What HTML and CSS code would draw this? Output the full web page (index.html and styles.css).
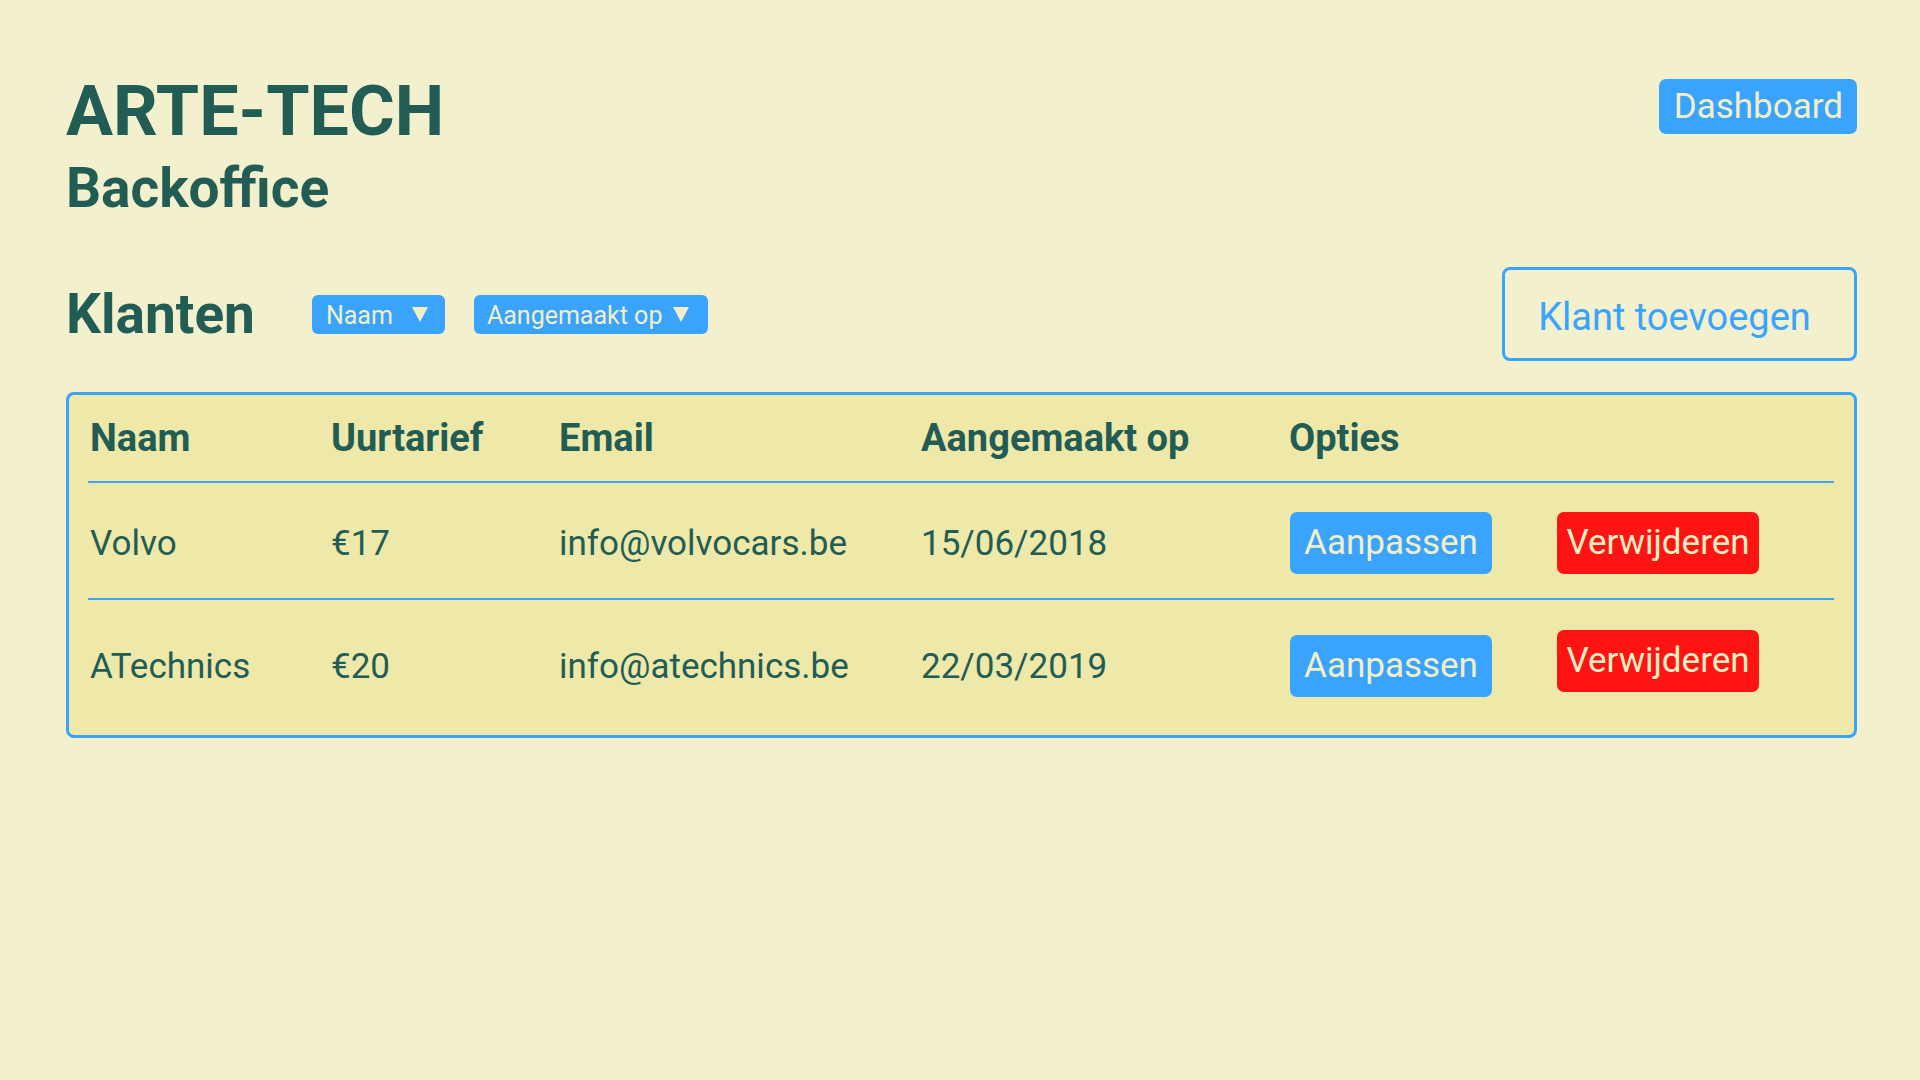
FILE: index.html
```html
<!DOCTYPE html>
<html lang="nl">
<head>
<meta charset="utf-8">
<title>ARTE-TECH Backoffice</title>
<link rel="stylesheet" href="styles.css">
</head>
<body>
<div class="page">
  <header class="top">
    <div class="brand">
      <h1 class="title">ARTE-TECH</h1>
      <h2 class="subtitle">Backoffice</h2>
    </div>
    <a class="btn-dashboard" href="#">Dashboard</a>
  </header>

  <section class="toolbar">
    <h3 class="section-title">Klanten</h3>
    <span class="pill pill-naam">Naam&nbsp;<svg class="caret" width="16" height="15" viewBox="0 0 16 15"><path d="M0 0 H16 L8 15 Z" fill="currentColor"/></svg></span>
    <span class="pill pill-date">Aangemaakt op<svg class="caret" width="16" height="15" viewBox="0 0 16 15"><path d="M0 0 H16 L8 15 Z" fill="currentColor"/></svg></span>
    <span class="spacer"></span>
    <a class="btn-add" href="#">Klant toevoegen</a>
  </section>

  <div class="table-wrap">
    <table class="clients">
      <colgroup>
        <col class="c-naam"><col class="c-tarief"><col class="c-email"><col class="c-date"><col class="c-edit"><col class="c-del">
      </colgroup>
      <thead>
        <tr><th>Naam</th><th>Uurtarief</th><th>Email</th><th>Aangemaakt op</th><th colspan="2">Opties</th></tr>
      </thead>
      <tbody>
        <tr class="row-first">
          <td>Volvo</td><td>€17</td><td>info@volvocars.be</td><td>15/06/2018</td>
          <td><a class="btn btn-edit" href="#">Aanpassen</a></td>
          <td><a class="btn btn-del" href="#">Verwijderen</a></td>
        </tr>
        <tr class="row-last">
          <td>ATechnics</td><td>€20</td><td>info@atechnics.be</td><td>22/03/2019</td>
          <td><a class="btn btn-edit" href="#">Aanpassen</a></td>
          <td><a class="btn btn-del btn-up" href="#">Verwijderen</a></td>
        </tr>
      </tbody>
    </table>
  </div>
</div>
</body>
</html>
```

FILE: styles.css
```css
* { box-sizing: border-box; }

html, body {
  margin: 0;
  background: #f3f0cd;
}

body {
  font-family: Roboto, "Liberation Sans", Arial, sans-serif;
  color: #225d55;
}

a { text-decoration: none; }

.page {
  padding: 76px 63px 0 66px;
}

.top {
  display: flex;
  justify-content: space-between;
  align-items: flex-start;
}

.title {
  margin: 0;
  font-size: 70px;
  line-height: 70px;
  font-weight: 700;
}

.subtitle {
  margin: 15px 0 0;
  font-size: 55px;
  line-height: 55px;
  font-weight: 700;
}

.btn-dashboard {
  margin-top: 3px;
  background: #39a3fd;
  color: #f3efc5;
  font-size: 35px;
  line-height: 40px;
  padding: 8px 14px 7px 15px;
  border-radius: 7px;
}

.toolbar {
  margin-top: 51px;
  display: flex;
  align-items: center;
}

.section-title {
  margin: 0;
  font-size: 55px;
  line-height: 55px;
  font-weight: 700;
}

.pill {
  display: inline-flex;
  align-items: baseline;
  background: #39a3fd;
  color: #f3efc5;
  font-size: 25px;
  line-height: 28px;
  height: 39px;
  padding: 7px 16px 4px 14px;
  border-radius: 6px;
}

.pill-naam { margin-left: 57px; width: 133px; }
.pill-date { margin-left: 29px; width: 234px; padding-left: 13px; padding-right: 16px; }

.caret {
  margin-left: 11px;
  align-self: center;
  margin-top: -3px;
}

.pill-naam .caret { margin-left: 13px; }

.spacer { flex: 1; }

.btn-add {
  width: 355px;
  height: 94px;
  border: 3px solid #39a3fd;
  border-radius: 8px;
  color: #39a3fd;
  font-size: 38px;
  line-height: 45px;
  padding: 25px 10px 18px 0;
  text-align: center;
}

.table-wrap {
  margin-top: 31px;
  background: #eee8a9;
  border: 3px solid #39a3fd;
  border-radius: 8px;
  padding: 0 20px 20px 19px;
}

.clients {
  width: 100%;
  border-collapse: collapse;
  table-layout: fixed;
}

.c-naam { width: 241px; }
.c-tarief { width: 228px; }
.c-email { width: 362px; }
.c-date { width: 368px; }
.c-edit { width: 270px; }

.clients th {
  text-align: left;
  font-size: 38px;
  line-height: 45px;
  font-weight: 700;
  padding: 21px 0 20px 2px;
  border-bottom: 2px solid #39a3fd;
  white-space: nowrap;
}

.clients td {
  font-size: 35px;
  line-height: 41px;
  vertical-align: middle;
  white-space: nowrap;
}

.row-first td {
  padding: 29px 0 24px 2px;
  border-bottom: 2px solid #39a3fd;
}

.row-last td {
  padding: 35px 0 18px 2px;
}

.btn {
  display: block;
  width: 202px;
  height: 62px;
  border-radius: 7px;
  color: #f3efc5;
  font-size: 35px;
  line-height: 41px;
  padding: 10px 0 11px;
  text-align: center;
}

.btn-edit {
  background: #39a3fd;
  margin-left: 1px;
}

.btn-del {
  background: #ff1313;
  margin-left: -2px;
}

.btn-up {
  margin-top: -5px;
  margin-bottom: 5px;
}
```
